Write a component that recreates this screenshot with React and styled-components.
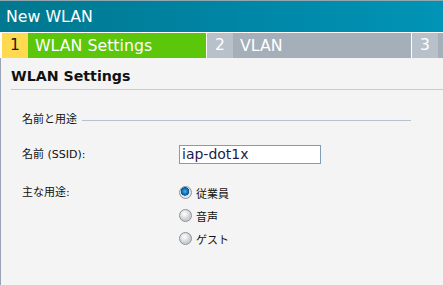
import React from 'react';
import styled, { createGlobalStyle } from 'styled-components';

const GlobalStyle = createGlobalStyle`
  body {
    margin: 0;
    background: #f4f4f4;
  }
`;

const Window = styled.div`
  width: 443px;
  height: 285px;
  display: flex;
  flex-direction: column;
  overflow: hidden;
  background: #f4f4f4;
`;

const TitleBar = styled.div`
  height: 33px;
  padding-left: 6px;
  box-sizing: border-box;
  background: linear-gradient(90deg, #00788f 0%, #0086a6 55%, #0094b6 100%);
  border-top: 1px solid #8fa7b0;
  border-bottom: 1px solid #ffffff;
  color: #ffffff;
  font-family: "DejaVu Sans", sans-serif;
  font-size: 15.8px;
  line-height: 31px;
`;

const Tabs = styled.div`
  display: flex;
  height: 25px;
  padding-left: 2px;
  gap: 1px;
  background: #ffffff;
`;

const Tab = styled.div`
  display: flex;
  flex-shrink: 0;
`;

const TabNum = styled.div`
  width: 26px;
  background: ${(p) => (p.$active ? '#ffd94f' : '#b8c1ca')};
  color: ${(p) => (p.$active ? '#1a1a1a' : '#ffffff')};
  font-family: "DejaVu Sans", sans-serif;
  font-size: 15.5px;
  line-height: 25px;
  padding-left: 8px;
  box-sizing: border-box;
`;

const TabLabel = styled.div`
  width: 178px;
  background: ${(p) => (p.$active ? '#5bc60a' : '#a5afb9')};
  color: #ffffff;
  font-family: "DejaVu Sans", sans-serif;
  font-size: 15.8px;
  line-height: 25px;
  padding-left: 7px;
  box-sizing: border-box;
  white-space: nowrap;
`;

const Body = styled.div`
  flex: 1;
  border-left: 1px solid #9aa3b5;
  background: #f4f4f4;
`;

const Header = styled.div`
  margin-left: 10px;
  height: 32px;
  box-sizing: border-box;
  padding-top: 10px;
  border-bottom: 1px solid #c6ccd4;
  font-family: "DejaVu Sans", sans-serif;
  font-weight: bold;
  font-size: 14.2px;
  line-height: 16px;
  color: #111111;
`;

const Section = styled.div`
  padding: 22px 32px 0 21px;
`;

const Legend = styled.div`
  display: flex;
  align-items: center;
  gap: 5px;
  font-family: "DejaVu Sans", "Noto Sans CJK JP", sans-serif;
  font-size: 11px;
  line-height: 16px;
  color: #111111;
  &::after {
    content: '';
    flex: 1;
    height: 1px;
    background: #b6c2d4;
  }
`;

const Form = styled.div`
  display: grid;
  grid-template-columns: 157px 1fr;
  row-gap: 22px;
  margin-top: 17px;
`;

const Label = styled.div`
  font-family: "DejaVu Sans", "Noto Sans CJK JP", sans-serif;
  font-size: 11px;
  color: #111111;
  line-height: ${(p) => p.$h || 19}px;
`;

const Input = styled.div`
  width: 142px;
  height: 19px;
  box-sizing: border-box;
  border: 1px solid #7f9db9;
  background: #ffffff;
  padding-left: 2px;
  font-family: "DejaVu Sans", sans-serif;
  font-size: 14px;
  line-height: 17px;
  color: #1c1c4a;
`;

const RadioList = styled.div`
  display: flex;
  flex-direction: column;
  gap: 10px;
`;

const RadioRow = styled.label`
  display: flex;
  align-items: center;
  gap: 4px;
  height: 13px;
  font-family: "Noto Sans CJK JP", sans-serif;
  font-size: 11px;
  color: #111111;
`;

const RadioDot = styled.span`
  width: 13px;
  height: 13px;
  box-sizing: border-box;
  border-radius: 50%;
  border: 1px solid #8d9196;
  background: ${(p) =>
    p.$on
      ? 'radial-gradient(circle at 45% 40%, #4fb0e8 0, #0a6fb8 3px, #054a86 4px, #dfe2e5 4.5px, #f4f5f6 100%)'
      : 'radial-gradient(circle at 40% 35%, #ffffff 0, #e6e8ea 3px, #c9ccd0 6px)'};
`;

const uses = ['従業員', '音声', 'ゲスト'];

const App = () => {
  return (
    <>
      <GlobalStyle />
      <Window>
        <TitleBar>New WLAN</TitleBar>
        <Tabs>
          <Tab>
            <TabNum $active>1</TabNum>
            <TabLabel $active>WLAN Settings</TabLabel>
          </Tab>
          <Tab>
            <TabNum>2</TabNum>
            <TabLabel>VLAN</TabLabel>
          </Tab>
          <Tab>
            <TabNum>3</TabNum>
            <TabLabel />
          </Tab>
        </Tabs>
        <Body>
          <Header>WLAN Settings</Header>
          <Section>
            <Legend>名前と用途</Legend>
            <Form>
              <Label>名前 (SSID):</Label>
              <Input>iap-dot1x</Input>
              <Label $h={13}>主な用途:</Label>
              <RadioList>
                {uses.map((u, i) => (
                  <RadioRow key={u}>
                    <RadioDot $on={i === 0} />
                    {u}
                  </RadioRow>
                ))}
              </RadioList>
            </Form>
          </Section>
        </Body>
      </Window>
    </>
  );
};

export default App;
